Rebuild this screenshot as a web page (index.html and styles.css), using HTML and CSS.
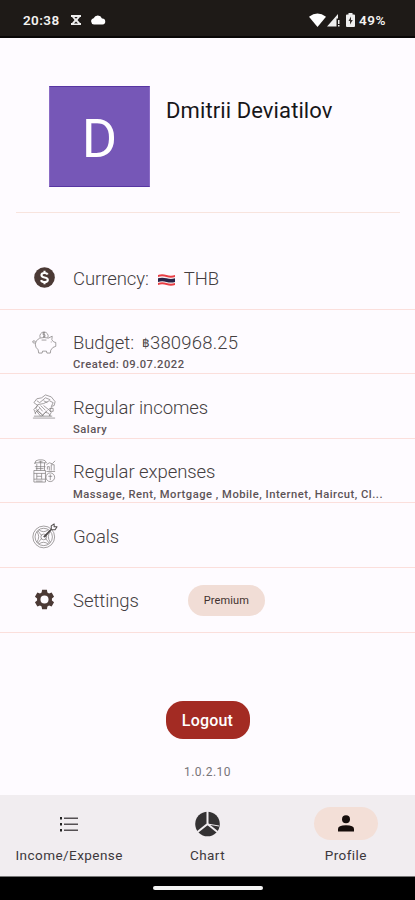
FILE: index.html
```html
<!DOCTYPE html>
<html lang="en">
<head>
<meta charset="utf-8">
<title>Profile</title>
<link rel="stylesheet" href="styles.css">
</head>
<body>
<div class="phone">
  <header class="status">
    <span class="time">20:38</span>
    <svg class="hourglass" width="12" height="12" viewBox="0 0 12 12"><path d="M1 1h10v2H10L7.500 6 10 9h1v2H1V9h1l2.500-3L2 3H1z" fill="#eee"/><path d="M4.300 3h3.400L6 4.800zM4 9.500 6 7.500l2 2z" fill="#1e1a17"/></svg>
    <svg class="cloud" width="16" height="11" viewBox="0 0 16 11"><path d="M4 10.500a3.200 3.200 0 0 1-.4-6.300A4.600 4.600 0 0 1 12 4.500a3 3 0 0 1 .5 6z" fill="#fff"/></svg>
    <span class="gap"></span>
    <svg width="17" height="14" viewBox="0 0 17 14"><path d="M0 3.800Q8.500-3 17 3.800L8.500 14z" fill="#fff"/></svg>
    <svg class="signal" width="14" height="14" viewBox="0 0 14 14"><path d="M0 13.500 11 1v4.500H9.500v8zM11 7h1.500v4H11zM11 12h1.500v1.500H11z" fill="#eee"/></svg>
    <svg class="battery" width="9" height="14" viewBox="0 0 9 14"><path d="M2.500 0h4v1.500H8q1 0 1 1V13q0 1-1 1H1q-1 0-1-1V2.500q0-1 1-1h1.500z" fill="#eee"/><path d="M5 3.500 2.500 8H4v3.500L6.800 7H5z" fill="#37312e"/></svg>
    <span class="percent">49%</span>
  </header>

  <section class="account">
    <div class="avatar"><span>D</span></div>
    <h1>Dmitrii Deviatilov</h1>
  </section>

  <main class="list">
    <div class="row">
      <svg class="icon" viewBox="0 0 28 28"><circle cx="14" cy="14" r="10.700" fill="#4b3935"/><path d="M17.300 10.900Q16.600 9.300 14 9.300c-4.200 0-4.200 4.100 0 4.700 4.700.7 4.500 4.800 0 4.800q-2.900 0-3.600-2M14 7v2.300m0 9.500V21" fill="none" stroke="#fff" stroke-width="2.200"/></svg>
      <div class="title"><span>Currency:</span><svg class="flag" width="17" height="12" viewBox="0 0 17 12"><path d="M0 1q4-1.500 8.500 0T17 1v10q-4 1.500-8.500 0T0 11z" fill="#e93d43"/><path d="M0 3q4-1.500 8.500 0T17 3v6q-4 1.500-8.500 0T0 9z" fill="#f4f0f2"/><path d="M0 4.300q4-1.200 8.500 0t8.500 0v3.600q-4 1.200-8.500 0T0 7.900z" fill="#292347"/></svg><span>THB</span></div>
    </div>
    <div class="row">
      <svg class="icon line" viewBox="0 0 28 28"><path d="M9 10.500q5-1.300 9 0l4-2-.4 3.800 2 2.200 2.100.5v4l-3 1.200-2.200 2.800-.5 3h-3.500l-.5-2h-4l-.5 2H8l-.6-3.400q-3-2.300-3-6 0-3.600 4.600-6.100zM4.500 15.500Q1 16 2 13.500q2-1 2.500 1M9.500 10a4.300 4.300 0 1 1 8 0M11 12.500h5"/><path d="M14.500 5h-2v2h2v2h-2m1-5v6M21 14v1"/></svg>
      <div class="title"><span>Budget:</span><small class="baht">฿</small><span class="amount">380968.25</span></div>
      <div class="sub">Created: 09.07.2022</div>
    </div>
    <div class="row">
      <svg class="icon line" viewBox="0 0 28 28"><path d="M2 26h23M3 24h19M5 22l-2-5 4-4-4-3 3-4 5-1 4-3 6 2 4 5-1 4-3 1 2-4-4-2-6 3-6 1-2 4 8 8M6 8l3 2 6-5 5 2M8 14l4 5m-2-6 5 5m-9 0 5 4m2-9 5 4 4-2M18 17l3 3-2 4m-3-5-5 5M15 20q4 0 5 4M13 8l4 2"/><path d="M20 16h3v3h-3zM5 18l5 6m-6-3 5-5m2 8 6-6"/></svg>
      <div class="title">Regular incomes</div>
      <div class="sub low">Salary</div>
    </div>
    <div class="row">
      <svg class="icon line" viewBox="0 0 28 28"><path d="M4 7q0-4 4-4h4q3 0 4 3H4zM6 7v7m4-10v10m4-8v8M4 10h11M3 14h12v12H3zm0 3h12M3 23h12M6 17v6m5-6v6M6 20h5M17 13v-3h2v4m2 0V8h3v6m-8 1h9M16 8l3-2 3 1 3-3M8 5h4"/><circle cx="20" cy="21" r="4.500"/><path d="M20 18v6m-2-4h4M5 12h8M5 25h7"/></svg>
      <div class="title">Regular expenses</div>
      <div class="sub low">Massage, Rent, Mortgage , Mobile, Internet, Haircut, Cl...</div>
    </div>
    <div class="row">
      <svg class="icon line" viewBox="0 0 28 28"><circle cx="13.200" cy="15.500" r="11.300"/><circle cx="13.200" cy="15.500" r="9"/><path d="M6 10q4 5 0 11m14-11q-4 5 0 11M8 8q5 4 10 0M8 23q5-4 10 0M7 9l4 5m-4 8 4-5m8-8-4 5m4 8-4-5"/><circle cx="13.200" cy="15.500" r="3"/><path d="m13 15.500 8-8V4l3-2v3h3l-2 3h-4m-7 8 7-8" stroke="#514d4d" stroke-width="1.100"/></svg>
      <div class="title">Goals</div>
    </div>
    <div class="row">
      <svg class="icon" viewBox="0 0 28 28"><path fill="#4b3935" fill-rule="evenodd" d="m11.500 4-.5 2.800-1.700 1-2.700-1-2.500 4.300L6.300 13v2l-2.200 1.900 2.500 4.300 2.700-1 1.700 1 .5 2.800h5l.5-2.800 1.700-1 2.700 1 2.500-4.300-2.200-1.900v-2l2.200-1.900-2.500-4.300-2.700 1-1.700-1-.5-2.800zM14 9.800a4.200 4.200 0 1 1 0 8.400 4.200 4.200 0 0 1 0-8.400z"/></svg>
      <div class="title settings"><span>Settings</span><span class="premium">Premium</span></div>
    </div>
  </main>

  <section class="session">
    <button class="logout">Logout</button>
    <div class="version">1.0.2.10</div>
  </section>

  <nav class="nav">
    <div class="tab">
      <span class="pill"><svg width="20" height="16" viewBox="0 0 20 16"><path d="M1 1h2v2.500H1zm0 6h2v2.500H1zm0 6h2v2.500H1z" fill="#222"/><path d="M5 1.500h14V3H5zm0 6h14V9H5zm0 6h14V15H5z" fill="#555053"/></svg></span>
      <span>Income/Expense</span>
    </div>
    <div class="tab">
      <span class="pill"><svg width="26" height="26" viewBox="0 0 26 26"><circle cx="13.500" cy="13" r="12.300" fill="#343233"/><path d="M13.500 0v13l-10 8m10-8 10 8" fill="none" stroke="#f1edf0" stroke-width="2"/><path d="M13.500 13 25 15" fill="none" stroke="#f1edf0" stroke-width="1"/></svg></span>
      <span>Chart</span>
    </div>
    <div class="tab">
      <span class="pill active"><svg width="16" height="17" viewBox="0 0 16 17"><circle cx="8" cy="4.200" r="4" fill="#160d0a"/><path d="M0 16.500V14q0-3.700 8-3.700t8 3.700v2.500z" fill="#160d0a"/></svg></span>
      <span>Profile</span>
    </div>
  </nav>
  <footer class="system"><span></span></footer>
</div>
</body>
</html>
```
FILE: styles.css
```css
* { box-sizing: border-box; }
body { margin: 0; font-family: Roboto, sans-serif; background: #fefbff; }
.phone { width: 415px; height: 900px; display: flex; flex-direction: column; overflow: hidden; }
svg { display: block; flex: none; }
.status { height: 38px; flex: none; background: #1e1a17; border-bottom: 2px solid #090706; display: flex; align-items: center; padding: 3px 28px 0 23px; color: #f4f2f0; font-size: 13.500px; font-weight: 600; }
.time { width: 47px; letter-spacing: .4px; }
.cloud { margin-left: 8px; }
.gap { flex: 1; }
.signal { margin-left: 1px; }
.battery { margin: 0 4px 0 5px; }
.percent { letter-spacing: .6px; width: 28px; }

.account { height: 175px; flex: none; margin: 0 15px 0 16px; padding: 48px 0 0 33px; display: flex; border-bottom: 1px solid #f8e4de; }
.avatar { width: 101px; height: 101px; background: #7657b7; border: 1px solid #8a6bc5; border-top-color: #5735a2; border-bottom-color: #5735a2; color: #fff; font-size: 54px; line-height: 103px; text-align: center; }
h1 { margin: 11px 0 0 16px; font-size: 22px; line-height: 28px; font-weight: 400; letter-spacing: .1px; color: #171619; white-space: nowrap; }

.list { padding-top: 32px; flex: none; }
.row { height: 64.600px; display: grid; grid-template-columns: 42px 1fr; grid-template-rows: 22px 20px; padding: 22px 0 0 31px; border-bottom: 1px solid #fbdfdc; }
.icon { width: 27px; height: 27px; margin-top: -3.500px; grid-row: 1; }
.line { fill: none; stroke: #777475; stroke-width: .7; stroke-linejoin: round; }
.title { grid-column: 2; display: flex; align-items: center; font-size: 18.500px; line-height: 22px; padding-top: 1px; letter-spacing: -.07px; color: #443e41; white-space: nowrap; font-weight: 300; }
.flag { margin: 2px 9px 0; }
.baht { font-size: 12px; margin-left: 8px; }
.amount { letter-spacing: .2px; }
.sub { grid-column: 2; font-size: 11.200px; line-height: 21px; letter-spacing: .5px; color: #5d5357; white-space: nowrap; font-weight: 500; }
.low { line-height: 23px; }
.premium { width: 77px; height: 31px; margin: -10px 0 -9px 49px; border-radius: 16px; background: #f1ddd6; color: #41312e; font-size: 11px; font-weight: 400; line-height: 32px; text-align: center; letter-spacing: .1px; }

.session { flex: 1; display: flex; flex-direction: column; align-items: center; padding-top: 68px; }
.logout { width: 84px; height: 38px; border: 0; border-radius: 17px; background: #a32b23; color: #fff; font: 500 16px/39px Roboto, sans-serif; padding: 0; letter-spacing: .2px; }
.version { margin-top: 23px; font-size: 12px; line-height: 20px; color: #777478; letter-spacing: .5px; }

.nav { height: 82px; flex: none; display: grid; grid-template-columns: repeat(3, 1fr); background: #f1edf0; border-bottom: 1px solid #777; padding-top: 12px; }
.tab { display: flex; flex-direction: column; align-items: center; font-size: 13.500px; line-height: 18px; letter-spacing: .45px; color: #3d383c; font-weight: 400; gap: 6px; }
.pill { width: 64px; height: 33px; border-radius: 17px; display: flex; align-items: center; justify-content: center; }
.active { background: #f3dfd7; }
.system { height: 23px; flex: none; background: #000; display: flex; justify-content: center; padding-top: 9px; }
.system span { width: 110px; height: 4px; border-radius: 2px; background: #f5f5f5; }
```
